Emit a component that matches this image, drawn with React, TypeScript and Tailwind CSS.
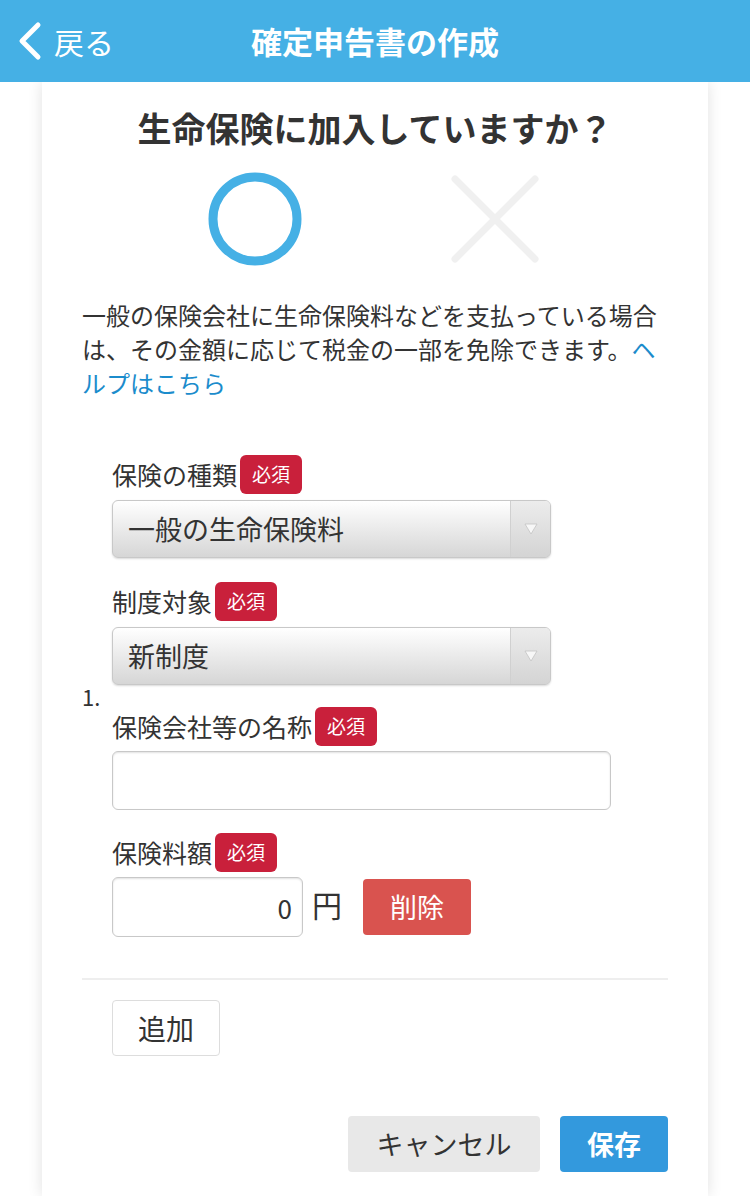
import React from "react";

const font = { fontFamily: '"Noto Sans CJK JP", "Noto Sans", sans-serif' };

function Required() {
  return (
    <span className="ml-[3px] inline-flex h-[39px] items-center rounded-[6px] bg-[#c9203b] px-[12px] text-[19px] text-white">
      必須
    </span>
  );
}

function Label({ text }: { text: string }) {
  return (
    <div className="flex items-center text-[25px] text-[#333]">
      <span>{text}</span>
      <Required />
    </div>
  );
}

function SelectBox({ value }: { value: string }) {
  return (
    <div className="mt-[6px] flex h-[58px] w-[439px] items-stretch overflow-hidden rounded-[6px] border border-[#c8c8c8] bg-gradient-to-b from-[#ffffff] to-[#d6d6d6] shadow-[0_1px_2px_rgba(0,0,0,0.15)]">
      <div className="flex flex-1 items-center pl-[15px] text-[27px] text-[#333]">{value}</div>
      <div className="flex w-[40px] items-center justify-center border-l border-[#d0d0d0] bg-gradient-to-b from-[#ececec] to-[#d4d4d4]">
        <svg width="14" height="12" viewBox="0 0 14 12">
          <path d="M1 1 L13 1 L7 11 Z" fill="#f7f7f7" stroke="#c4c4c4" strokeWidth="0.8" />
        </svg>
      </div>
    </div>
  );
}

export default function App() {
  return (
    <div className="min-h-[1196px] bg-white" style={font}>
      {/* header */}
      <div className="relative flex h-[82px] items-center justify-center bg-[#45b0e5]">
        <div className="absolute left-[16px] top-0 flex h-full items-center gap-[10px] text-white">
          <svg width="28" height="40" viewBox="0 0 28 40">
            <path d="M22 4 L6 20 L22 36" fill="none" stroke="white" strokeWidth="5" strokeLinecap="round" strokeLinejoin="round" />
          </svg>
          <span className="text-[30px] leading-none">戻る</span>
        </div>
        <h1 className="text-[31px] font-bold text-white">確定申告書の作成</h1>
      </div>

      {/* card */}
      <div className="mx-[42px] min-h-[1114px] bg-white shadow-[0_0_14px_rgba(0,0,0,0.12)]">
        <h2 className="pt-[22px] text-center text-[34px] font-bold leading-[48px] text-[#333]">
          生命保険に加入していますか？
        </h2>

        <div className="mt-[17px] flex justify-center gap-[140px]">
          <svg width="100" height="100" viewBox="0 0 100 100">
            <circle cx="50" cy="50" r="42" fill="none" stroke="#45b0e5" strokeWidth="9" />
          </svg>
          <svg width="100" height="100" viewBox="0 0 100 100">
            <path d="M10 10 L90 90 M90 10 L10 90" stroke="#f0f0f0" strokeWidth="7" strokeLinecap="round" />
          </svg>
        </div>

        <p className="mx-[40px] mt-[29px] text-[24px] leading-[34px] text-[#333]">
          一般の保険会社に生命保険料などを支払っている場合は、その金額に応じて税金の一部を免除できます。
          <span className="text-[#1b8ccc]">ヘルプはこちら</span>
        </p>

        {/* list */}
        <div className="mx-[40px] mt-[55px] flex items-center">
          <div className="w-[30px] text-[22px] text-[#333]">1.</div>
          <div className="flex flex-col">
            <Label text="保険の種類" />
            <SelectBox value="一般の生命保険料" />

            <div className="mt-[24px]">
              <Label text="制度対象" />
            </div>
            <SelectBox value="新制度" />

            <div className="mt-[22px]">
              <Label text="保険会社等の名称" />
            </div>
            <div className="mt-[5px] h-[59px] w-[499px] rounded-[6px] border border-[#c8c8c8] bg-white shadow-[inset_0_1px_2px_rgba(0,0,0,0.12)]" />

            <div className="mt-[23px]">
              <Label text="保険料額" />
            </div>
            <div className="mt-[5px] flex items-center">
              <div className="flex h-[60px] w-[191px] items-center justify-end rounded-[6px] border border-[#c8c8c8] bg-white pr-[10px] text-[26px] text-[#333] shadow-[inset_0_1px_2px_rgba(0,0,0,0.12)]">
                0
              </div>
              <span className="ml-[9px] -translate-y-[3px] text-[30px] text-[#333]">円</span>
              <button className="ml-[21px] flex h-[56px] w-[108px] items-center justify-center rounded-[4px] bg-[#d9534f] text-[27px] text-white">
                削除
              </button>
            </div>
          </div>
        </div>

        <div className="mx-[40px] mt-[41px] border-t-2 border-[#eeeeee]" />

        <div className="ml-[70px] mt-[20px]">
          <button className="flex h-[56px] w-[108px] items-center justify-center rounded-[4px] border border-[#dddddd] bg-white text-[28px] text-[#333]">
            追加
          </button>
        </div>

        <div className="mr-[40px] mt-[60px] flex justify-end gap-[20px]">
          <button className="flex h-[56px] w-[192px] items-center justify-center rounded-[4px] bg-[#e8e8e8] text-[27px] text-[#333]">
            キャンセル
          </button>
          <button className="flex h-[56px] w-[108px] items-center justify-center rounded-[4px] bg-[#3399dd] text-[27px] font-bold text-white">
            保存
          </button>
        </div>
      </div>
    </div>
  );
}
